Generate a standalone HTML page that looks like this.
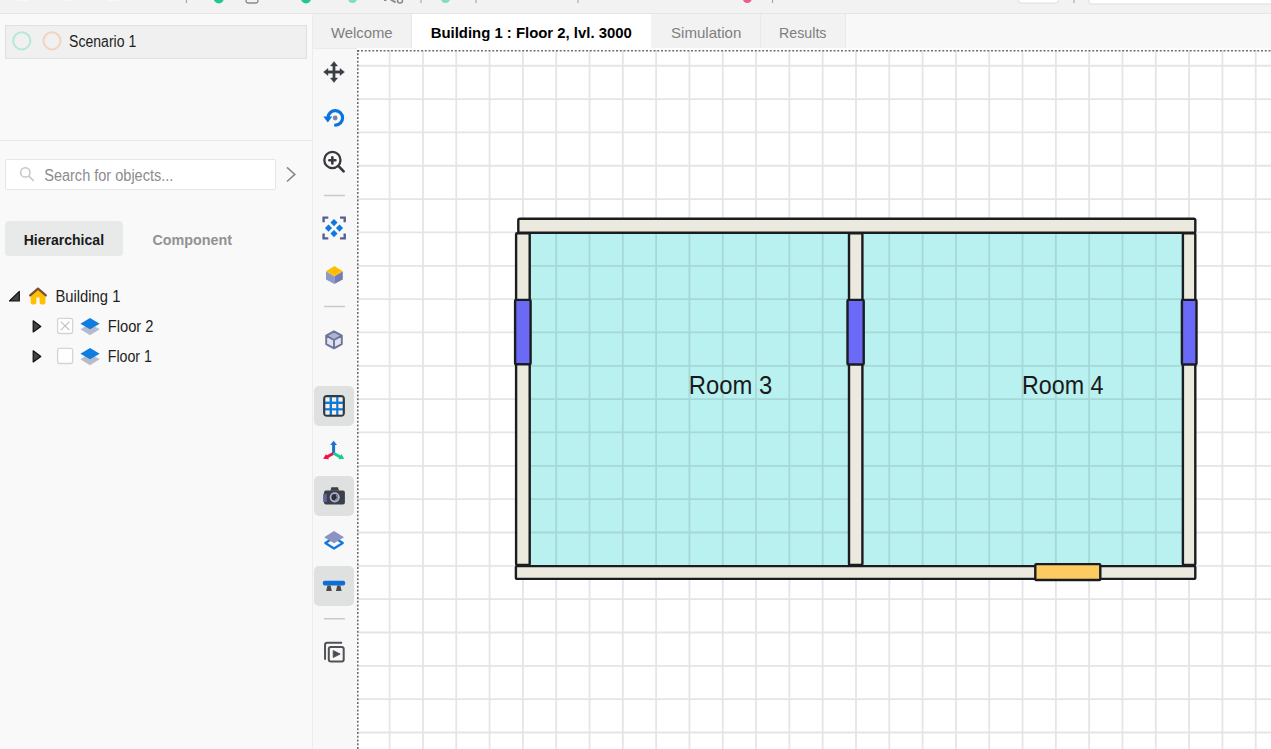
<!DOCTYPE html>
<html><head><meta charset="utf-8">
<style>
*{box-sizing:border-box;margin:0;padding:0}
html,body{width:1271px;height:749px;overflow:hidden;background:#f9f9f9;font-family:"Liberation Sans",sans-serif;position:relative}
.a{position:absolute}
</style></head><body>
<div class="a" style="left:0;top:0;width:1271px;height:14px;background:#f2f2f2;border-bottom:1px solid #e6e6e6"></div>
<div class="a" style="left:0;top:14px;width:313px;height:735px;background:#f9f9f9;border-right:1px solid #ececec"></div>
<div class="a" style="left:5px;top:25px;width:302px;height:34px;background:#f0f0f0;border:1px solid #e0e0e0"></div>
<div class="a" style="left:0;top:140px;width:312px;height:1px;background:#e8e8e8"></div>
<div class="a" style="left:5px;top:159px;width:271px;height:31px;background:#fff;border:1px solid #e6e6e6;border-radius:2px"></div>
<div class="a" style="left:5px;top:221px;width:118px;height:35px;background:#e8e9e9;border-radius:4px"></div>
<div class="a" style="left:313px;top:14px;width:958px;height:34px;background:#f8f8f8"></div>
<div class="a" style="left:313px;top:14px;width:99px;height:34px;background:#f2f2f2;border-right:1px solid #e7e7e7"></div>
<div class="a" style="left:412px;top:14px;width:239px;height:34px;background:#fff"></div>
<div class="a" style="left:651px;top:14px;width:110px;height:34px;background:#f2f2f2;border-right:1px solid #e9e9e9"></div>
<div class="a" style="left:761px;top:14px;width:85px;height:34px;background:#f2f2f2;border-right:1px solid #e9e9e9"></div>
<div class="a" style="left:357px;top:48px;width:914px;height:3px;background:#fff"></div>
<div class="a" style="left:313px;top:48px;width:44px;height:701px;background:#f8f8f8;border-top:1px solid #ebebeb"></div>
<div class="a" style="left:314px;top:386px;width:40px;height:40px;background:#dfe0e0;border-radius:5px"></div>
<div class="a" style="left:314px;top:476px;width:40px;height:40px;background:#dfe0e0;border-radius:5px"></div>
<div class="a" style="left:314px;top:566px;width:40px;height:40px;background:#dfe0e0;border-radius:5px"></div>
<svg class="a" style="left:0;top:0" width="1271" height="749" viewBox="0 0 1271 749" font-family="Liberation Sans">
<defs><clipPath id="cc"><rect x="357" y="50" width="914" height="699"/></clipPath></defs>
<g clip-path="url(#cc)">
<rect x="357" y="50" width="914" height="699" fill="#fff"/>
<path d="M389.65 50V749M422.96 50V749M456.27 50V749M489.58 50V749M522.89 50V749M556.20 50V749M589.51 50V749M622.82 50V749M656.13 50V749M689.44 50V749M722.75 50V749M756.06 50V749M789.37 50V749M822.68 50V749M855.99 50V749M889.30 50V749M922.61 50V749M955.92 50V749M989.23 50V749M1022.54 50V749M1055.85 50V749M1089.16 50V749M1122.47 50V749M1155.78 50V749M1189.09 50V749M1222.40 50V749M1255.71 50V749M357 65.76H1271M357 99.10H1271M357 132.43H1271M357 165.77H1271M357 199.11H1271M357 232.44H1271M357 265.78H1271M357 299.12H1271M357 332.46H1271M357 365.79H1271M357 399.13H1271M357 432.47H1271M357 465.80H1271M357 499.14H1271M357 532.48H1271M357 565.82H1271M357 599.15H1271M357 632.49H1271M357 665.83H1271M357 699.16H1271M357 732.50H1271" stroke="#e5e5e5" stroke-width="1.8" fill="none"/>
<rect x="530" y="232.5" width="319" height="333" fill="#b9f1f1" style="mix-blend-mode:multiply"/>
<rect x="862.5" y="232.5" width="320" height="333" fill="#b9f1f1" style="mix-blend-mode:multiply"/>
<g stroke="#1b1c1f" stroke-width="2.4" stroke-linejoin="round" fill="#eceadf">
<rect x="518.3" y="218.8" width="677" height="13.9" rx="1.5"/>
<rect x="516.1" y="233.3" width="13.6" height="331.6" rx="1"/>
<rect x="849" y="233.3" width="13.4" height="331.6" rx="1"/>
<rect x="1182.9" y="233.3" width="12.4" height="331.6" rx="1"/>
<rect x="515.9" y="566.1" width="679.4" height="12.8" rx="1.5"/>
</g>
<g stroke="#1b1c1f" stroke-width="2.4" stroke-linejoin="round" fill="#6a6af6">
<rect x="515.1" y="299.9" width="15.5" height="64.3" rx="1"/>
<rect x="847.5" y="299.9" width="16.2" height="64.6" rx="1"/>
<rect x="1181.9" y="299.9" width="14.6" height="64.6" rx="1"/>
</g>
<rect x="1035.3" y="564.1" width="65" height="15.9" rx="1" fill="#fccb61" stroke="#1b1c1f" stroke-width="2.4"/>
<line x1="357.25" y1="50.6" x2="1271" y2="50.6" stroke="#6f6f6f" stroke-width="1.8" stroke-dasharray="2 1.75"/>
<circle cx="357.9" cy="50.6" r="1.1" fill="#333"/>
<line x1="357.65" y1="49.6" x2="357.65" y2="749" stroke="#6f6f6f" stroke-width="1.9" stroke-dasharray="2 1.75"/>
</g>
<!-- scenario circles -->
<circle cx="21.8" cy="40.8" r="8.6" fill="none" stroke="#b5e9d4" stroke-width="2"/>
<circle cx="52" cy="40.8" r="8.6" fill="none" stroke="#f3d2c0" stroke-width="2"/>
<!-- search icon -->
<circle cx="25.3" cy="172.4" r="4.7" fill="none" stroke="#c6c6c6" stroke-width="1.5"/>
<path d="M28.8 176 L33.2 180.4" stroke="#c6c6c6" stroke-width="1.6" stroke-linecap="round"/>
<!-- chevron -->
<path d="M287 167.3 L294.8 174.4 L287 181.5" fill="none" stroke="#8a8a8a" stroke-width="1.6"/>
<!-- tree -->
<path d="M9.5 301 L19.3 301 L19.3 291.4 Z" fill="#444" stroke="#111" stroke-width="1.2" stroke-linejoin="round"/>
<path d="M30.6 296 L38 289.5 L45.4 296 V302.6 Q45.4 304.6 43.4 304.6 H41.6 Q39.6 304.6 39.6 302.6 V297.4 H36.4 V302.6 Q36.4 304.6 34.4 304.6 H32.6 Q30.6 304.6 30.6 302.6 Z" fill="#ffc000"/>
<path d="M30.2 295.4 L38 288.6 L45.8 295.4" fill="none" stroke="#7a5136" stroke-width="2.3" stroke-linecap="round" stroke-linejoin="round"/>
<path d="M33.2 320.8 L33.2 332 L40.8 326.4 Z" fill="#444" stroke="#111" stroke-width="1.2" stroke-linejoin="round"/>
<path d="M33.2 350.8 L33.2 362 L40.8 356.4 Z" fill="#444" stroke="#111" stroke-width="1.2" stroke-linejoin="round"/>
<rect x="57.6" y="318.3" width="15" height="15.2" rx="2" fill="#fff" stroke="#d4d4d4" stroke-width="1.3"/>
<path d="M60.8 321.6 L69.4 330.2 M69.4 321.6 L60.8 330.2" stroke="#bdbdbd" stroke-width="1.1"/>
<rect x="57.6" y="348.3" width="15" height="15.2" rx="2" fill="#fff" stroke="#d4d4d4" stroke-width="1.3"/>
<g>
<path d="M80.4 329.2 L90 323.6 L99.7 329.2 L90 335.2 Z" fill="#b6bccb"/>
<path d="M80.4 323.7 L90 318.1 L99.7 323.7 L90 329.3 Z" fill="#0f7ce0"/>
<path d="M80.4 359.2 L90 353.6 L99.7 359.2 L90 365.2 Z" fill="#b6bccb"/>
<path d="M80.4 353.7 L90 348.1 L99.7 353.7 L90 359.3 Z" fill="#0f7ce0"/>
</g>
<!-- vertical toolbar -->
<path d="M334.00 61.50 L337.60 66.00 L335.15 66.00 L335.15 70.85 L340.00 70.85 L340.00 68.40 L344.50 72.00 L340.00 75.60 L340.00 73.15 L335.15 73.15 L335.15 78.00 L337.60 78.00 L334.00 82.50 L330.40 78.00 L332.85 78.00 L332.85 73.15 L328.00 73.15 L328.00 75.60 L323.50 72.00 L328.00 68.40 L328.00 70.85 L332.85 70.85 L332.85 66.00 L330.40 66.00Z" fill="#3b3f45" stroke="#3b3f45" stroke-width="0.4" stroke-linejoin="round"/>
<path d="M335.6 125.2 A7.3 7.3 0 1 0 328 117.4" fill="none" stroke="#0b74de" stroke-width="3.2" stroke-linecap="round"/>
<path d="M323.3 116.6 L332.3 116.6 L327.8 122.6 Z" fill="#0b74de"/>
<circle cx="335.2" cy="118" r="2.4" fill="#7c83a8"/>
<circle cx="332.4" cy="160" r="8.1" fill="none" stroke="#35393e" stroke-width="2.3"/>
<path d="M329.3 160.3 H335.4 M332.35 157.2 V163.4" stroke="#35393e" stroke-width="2.6" stroke-linecap="round"/>
<path d="M338.8 166.4 L343.6 171.4" stroke="#35393e" stroke-width="2.7" stroke-linecap="round"/>
<g stroke="#c9c9c9" stroke-width="1.5"><path d="M324 195.5 H345 M324 306.6 H345 M324 618.7 H345"/></g>
<g fill="none" stroke="#56608f" stroke-width="2.4"><path d="M323.6 222.3 V217.6 H328.3 M340 217.6 H344.7 V222.3 M323.6 233.6 V238.4 H328.3 M340 238.4 H344.7 V233.6"/></g>
<g fill="#0f79e0"><path d="M334.00 219.05L337.55 222.60L334.00 226.15L330.45 222.60ZM328.50 224.55L332.05 228.10L328.50 231.65L324.95 228.10ZM339.50 224.55L343.05 228.10L339.50 231.65L335.95 228.10ZM334.00 230.05L337.55 233.60L334.00 237.15L330.45 233.60Z"/></g>
<path d="M326 271.2 L334.4 276.2 L334.4 284 L326 279.6 Z" fill="#8f99c8"/>
<path d="M342.8 271.2 L334.4 276.2 L334.4 284 L342.8 279.6 Z" fill="#737cb4"/>
<path d="M334.4 266 L342.8 271.2 L334.4 276.2 L326 271.2 Z" fill="#ffbe00"/>
<path d="M334 331.3 L341.8 335.7 L334 340 L326.2 335.7 Z" fill="#abb3d7"/>
<path d="M326.2 335.7 L334 340 V348.3 L326.2 344.1 Z M341.8 335.7 L334 340 V348.3 L341.8 344.1 Z" fill="#dfe2f0"/>
<path d="M334 331.3 L341.8 335.7 V344.1 L334 348.3 L326.2 344.1 V335.7 Z M326.2 335.7 L334 340 L341.8 335.7 M334 340 V348.3" fill="none" stroke="#6e7494" stroke-width="1.9" stroke-linejoin="round"/>
<rect x="324.1" y="396.1" width="19.8" height="19.6" rx="3" fill="#0a79dc" stroke="#35393e" stroke-width="2"/>
<g fill="#fdeee0"><rect x="325.4" y="397.4" width="4.2" height="4.2"/><rect x="332" y="397.4" width="4.2" height="4.2"/><rect x="338.4" y="397.4" width="4.2" height="4.2"/><rect x="325.4" y="404" width="4.2" height="4.2"/><rect x="332" y="404" width="4.2" height="4.2"/><rect x="338.4" y="404" width="4.2" height="4.2"/><rect x="325.4" y="410.4" width="4.2" height="4.2"/><rect x="332" y="410.4" width="4.2" height="4.2"/><rect x="338.4" y="410.4" width="4.2" height="4.2"/></g>
<path d="M333.6 453.2 V444" stroke="#1a6fd8" stroke-width="3"/>
<path d="M333.6 440.8 L337 445 L330.2 445 Z" fill="#1a6fd8"/>
<path d="M333.6 453.2 L327 457" stroke="#f0114a" stroke-width="3"/>
<path d="M323.2 458.8 L326 454 L329 459.2 Z" fill="#f0114a"/>
<path d="M333.6 453.2 L340.2 457" stroke="#10d08a" stroke-width="3"/>
<path d="M344.2 458.8 L341.4 454 L338.4 459.2 Z" fill="#10d08a"/>
<rect x="324" y="490.5" width="20.9" height="14.1" rx="2" fill="#3c4045"/>
<path d="M330.4 490.8 L331.4 487.3 H338 L339 490.8 Z" fill="#3c4045"/>
<rect x="323.1" y="493.9" width="3.7" height="8.1" fill="#5c6699"/>
<circle cx="334.7" cy="497.3" r="4.2" fill="#2c2f33" stroke="#a9b1e3" stroke-width="1.8"/>
<path d="M336 494.8 A2.8 2.8 0 0 1 335 500" fill="none" stroke="#8a8d90" stroke-width="1.4"/>
<path d="M325.3 543 L334 537.5 L342.8 543 L334 548.5 Z" fill="none" stroke="#1176e0" stroke-width="2.2" stroke-linejoin="round"/>
<path d="M334 531 L344 537.2 L334 543.2 L324.2 537.2 Z" fill="#8a93c4"/>
<rect x="322.8" y="580.8" width="22.4" height="4.8" rx="2" fill="#0a70d8"/>
<path d="M327.4 585.6 H330.6 L331.8 591 H326.2 Z M337.2 585.6 H340.4 L341.6 591 H336 Z" fill="#4a4a4a"/>
<path d="M325.05 659 V645 Q325.05 642.8 327.2 642.8 H341.3" fill="none" stroke="#4f5257" stroke-width="2" stroke-linecap="round"/>
<rect x="328.8" y="647" width="14.9" height="14.5" rx="2" fill="none" stroke="#4f5257" stroke-width="2"/>
<path d="M333.2 650.5 L333.2 657.6 L340.2 654 Z" fill="#4a4d52" stroke="#4a4d52" stroke-width="0.8" stroke-linejoin="round"/>
<!-- top strip -->
<g>
<path d="M186.4 0 V3" stroke="#9a9a9a" stroke-width="1"/>
<circle cx="218.8" cy="-1.5" r="5" fill="#1ec98a"/>
<rect x="246" y="-8" width="12" height="11" rx="2.5" fill="none" stroke="#8a8a8a" stroke-width="1.3"/>
<circle cx="306" cy="-1.5" r="5" fill="#1ec98a"/>
<circle cx="352.5" cy="-1.5" r="4.5" fill="#7ee0b8"/>
<path d="M384 0.4 H386.4" stroke="#8a8a8a" stroke-width="1.2"/><path d="M390.6 -0.5 L395.6 2.4" stroke="#8a8a8a" stroke-width="1.8"/><path d="M397.6 -1 V1 Q397.6 3 400 3 Q402.4 3 402.4 1 V-1" stroke="#8a8a8a" stroke-width="1.6" fill="none"/><path d="M16 0.5 H29 M63 0.5 H74 M107 0.5 H119" stroke="#f8f8f8" stroke-width="1"/>
<path d="M421 0 V3 M476 0 V3 M578 0 V3 M772.6 0 V3 M1074 0 V3" stroke="#9a9a9a" stroke-width="1"/>
<circle cx="445.5" cy="-1.5" r="4.5" fill="#7ee0b8"/>
<circle cx="747.3" cy="-1.5" r="4.5" fill="#f05a8c"/>
<rect x="1018.5" y="-10" width="40" height="13" rx="2.5" fill="#fff" stroke="#dcdcdc" stroke-width="1"/>
<rect x="1089" y="-10" width="190" height="14" rx="2.5" fill="#fff" stroke="#dcdcdc" stroke-width="1"/>
</g>

<text x="330.90" y="37.70" font-size="15" font-weight="400" fill="#7f7f7f" textLength="61.74" lengthAdjust="spacingAndGlyphs">Welcome</text>
<text x="430.71" y="38.00" font-size="15" font-weight="700" fill="#000" textLength="201.13" lengthAdjust="spacingAndGlyphs">Building 1 : Floor 2, lvl. 3000</text>
<text x="671.00" y="37.80" font-size="15" font-weight="400" fill="#7f7f7f" textLength="70.34" lengthAdjust="spacingAndGlyphs">Simulation</text>
<text x="779.05" y="37.80" font-size="15" font-weight="400" fill="#7f7f7f" textLength="47.42" lengthAdjust="spacingAndGlyphs">Results</text>
<text x="69.10" y="46.90" font-size="16" font-weight="400" fill="#1e1e1e" textLength="67.11" lengthAdjust="spacingAndGlyphs">Scenario 1</text>
<text x="44.20" y="181.00" font-size="15.8" font-weight="400" fill="#8c8c8c" textLength="129.18" lengthAdjust="spacingAndGlyphs">Search for objects...</text>
<text x="23.66" y="245.40" font-size="15" font-weight="700" fill="#1a1a1a" textLength="80.39" lengthAdjust="spacingAndGlyphs">Hierarchical</text>
<text x="152.40" y="245.40" font-size="15" font-weight="700" fill="#929292" textLength="79.60" lengthAdjust="spacingAndGlyphs">Component</text>
<text x="55.48" y="302.10" font-size="16" font-weight="400" fill="#1e1e1e" textLength="64.93" lengthAdjust="spacingAndGlyphs">Building 1</text>
<text x="107.78" y="332.00" font-size="16" font-weight="400" fill="#1e1e1e" textLength="45.72" lengthAdjust="spacingAndGlyphs">Floor 2</text>
<text x="107.81" y="361.90" font-size="16" font-weight="400" fill="#1e1e1e" textLength="44.10" lengthAdjust="spacingAndGlyphs">Floor 1</text>
<text x="688.69" y="393.50" font-size="25" font-weight="400" fill="#1a1a1a" textLength="83.47" lengthAdjust="spacingAndGlyphs">Room 3</text>
<text x="1021.94" y="393.50" font-size="25" font-weight="400" fill="#1a1a1a" textLength="81.57" lengthAdjust="spacingAndGlyphs">Room 4</text>
</svg>
</body></html>
